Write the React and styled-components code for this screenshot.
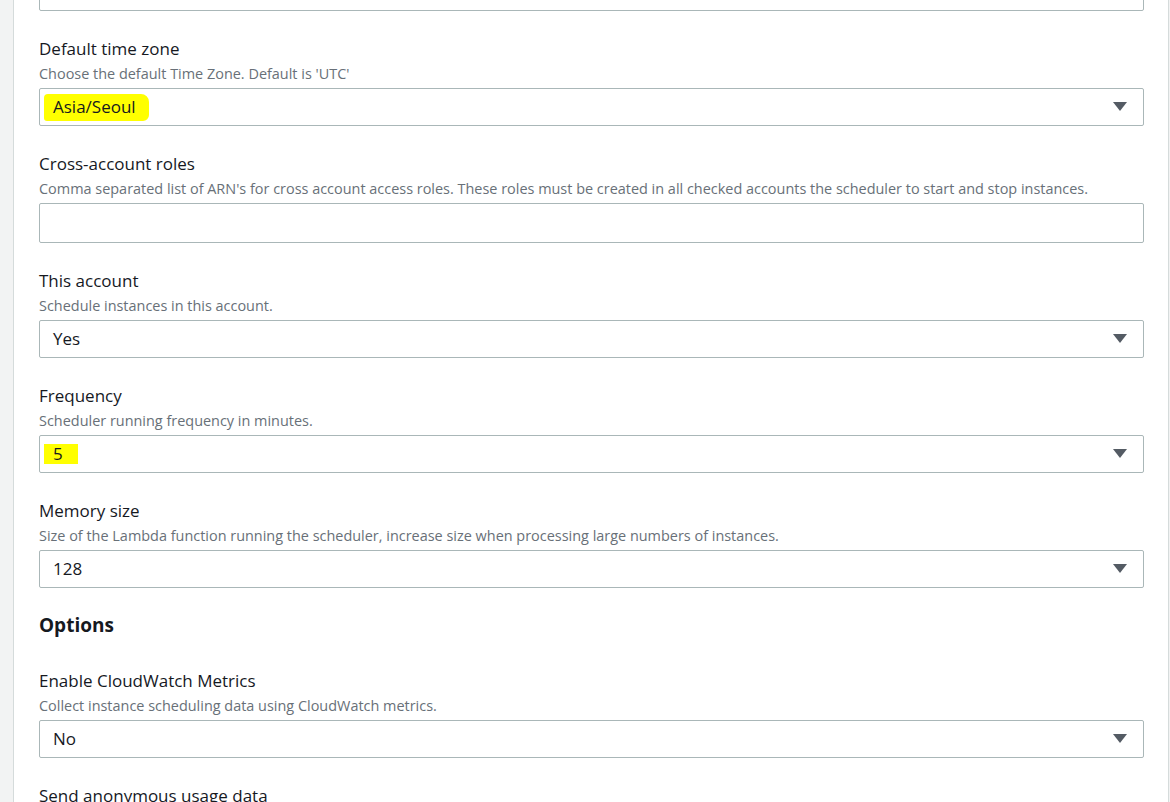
import React from "react";
import styled, { createGlobalStyle } from "styled-components";

const Global = createGlobalStyle`
  html, body { margin: 0; padding: 0; height: 100%; overflow: hidden; }
  body { background: #f2f3f3; font-family: "Open Sans", "Noto Sans", Arial, sans-serif; color: #16191f; }
`;

const Shell = styled.div`
  display: flex;
  height: 802px;
  overflow: hidden;
`;

const Gutter = styled.div`
  width: 13px;
  flex: none;
  background: #f2f3f3;
  border-right: 1px solid #d5dbdb;
`;

const Panel = styled.main`
  flex: 1;
  background: #fff;
  border-right: 1px solid #d5dbdb;
  padding: 0 24px 0 25px;
  margin-right: 1px;
`;

const Form = styled.div`
  margin-top: -27px;
  display: flex;
  flex-direction: column;
`;

const Field = styled.div`
  display: flex;
  flex-direction: column;
  margin-bottom: 27px;
`;

const Label = styled.div`
  font-size: 17px;
  line-height: 22px;
  color: #16191f;
`;

const Desc = styled.div`
  font-size: 14.45px;
  line-height: 20px;
  color: #687078;
  margin-top: 4px;
  margin-bottom: 4px;
`;

const Box = styled.div`
  box-sizing: border-box;
  height: ${(p) => p.$h || 38}px;
  border: 1px solid #aab7b8;
  border-radius: 2px;
  background: #fff;
  display: flex;
  align-items: center;
  padding: 0 16px 0 13px;
  font-size: 17px;
  color: #16191f;
`;

const Value = styled.span`
  flex: 1;
  display: flex;
  align-items: center;
`;

const Mark = styled.span`
  background: #ffff00;
  padding: ${(p) => p.$pad || "2px 9px 3px 4px"};
  margin-left: -9px;
  border-radius: ${(p) => p.$r || "0"};
  line-height: 20px;
`;

const Plain = styled.span`
  line-height: 20px;
`;

const Heading = styled.h2`
  margin: -3px 0 32px;
  font-size: 19px;
  line-height: 26px;
  font-weight: 700;
  color: #16191f;
`;

const Caret = () => (
  <svg width="14" height="10" viewBox="0 0 14 10" aria-hidden="true">
    <path d="M0 0 H14 L7 9 Z" fill="#545b64" />
  </svg>
);

const Select = ({ children }) => (
  <Box>
    <Value>{children}</Value>
    <Caret />
  </Box>
);

const fields = [
  {
    label: "Default time zone",
    desc: "Choose the default Time Zone. Default is 'UTC'",
    value: <Mark $pad="3px 13px 4px 9px" $r="4px 8px 6px 3px">Asia/Seoul</Mark>,
    select: true,
  },
  {
    label: "Cross-account roles",
    desc: "Comma separated list of ARN's for cross account access roles. These roles must be created in all checked accounts the scheduler to start and stop instances.",
    text: true,
  },
  {
    label: "This account",
    desc: "Schedule instances in this account.",
    value: <Plain>Yes</Plain>,
    select: true,
  },
  {
    label: "Frequency",
    desc: "Scheduler running frequency in minutes.",
    value: <Mark $pad="0 15px 0 9px">5</Mark>,
    select: true,
  },
  {
    label: "Memory size",
    desc: "Size of the Lambda function running the scheduler, increase size when processing large numbers of instances.",
    value: <Plain>128</Plain>,
    select: true,
  },
];

export default function App() {
  return (
    <>
      <Global />
      <Shell>
        <Gutter />
        <Panel>
          <Form>
            <Field>
              <Box $h={38} />
            </Field>
            {fields.map((f) => (
              <Field key={f.label}>
                <Label>{f.label}</Label>
                <Desc>{f.desc}</Desc>
                {f.text ? <Box $h={40} /> : <Select>{f.value}</Select>}
              </Field>
            ))}
            <Heading>Options</Heading>
            <Field>
              <Label>Enable CloudWatch Metrics</Label>
              <Desc>Collect instance scheduling data using CloudWatch metrics.</Desc>
              <Select><Plain>No</Plain></Select>
            </Field>
            <Field>
              <Label>Send anonymous usage data</Label>
              <Desc>Send anonymous operational metrics to AWS.</Desc>
              <Select><Plain>Yes</Plain></Select>
            </Field>
          </Form>
        </Panel>
      </Shell>
    </>
  );
}
